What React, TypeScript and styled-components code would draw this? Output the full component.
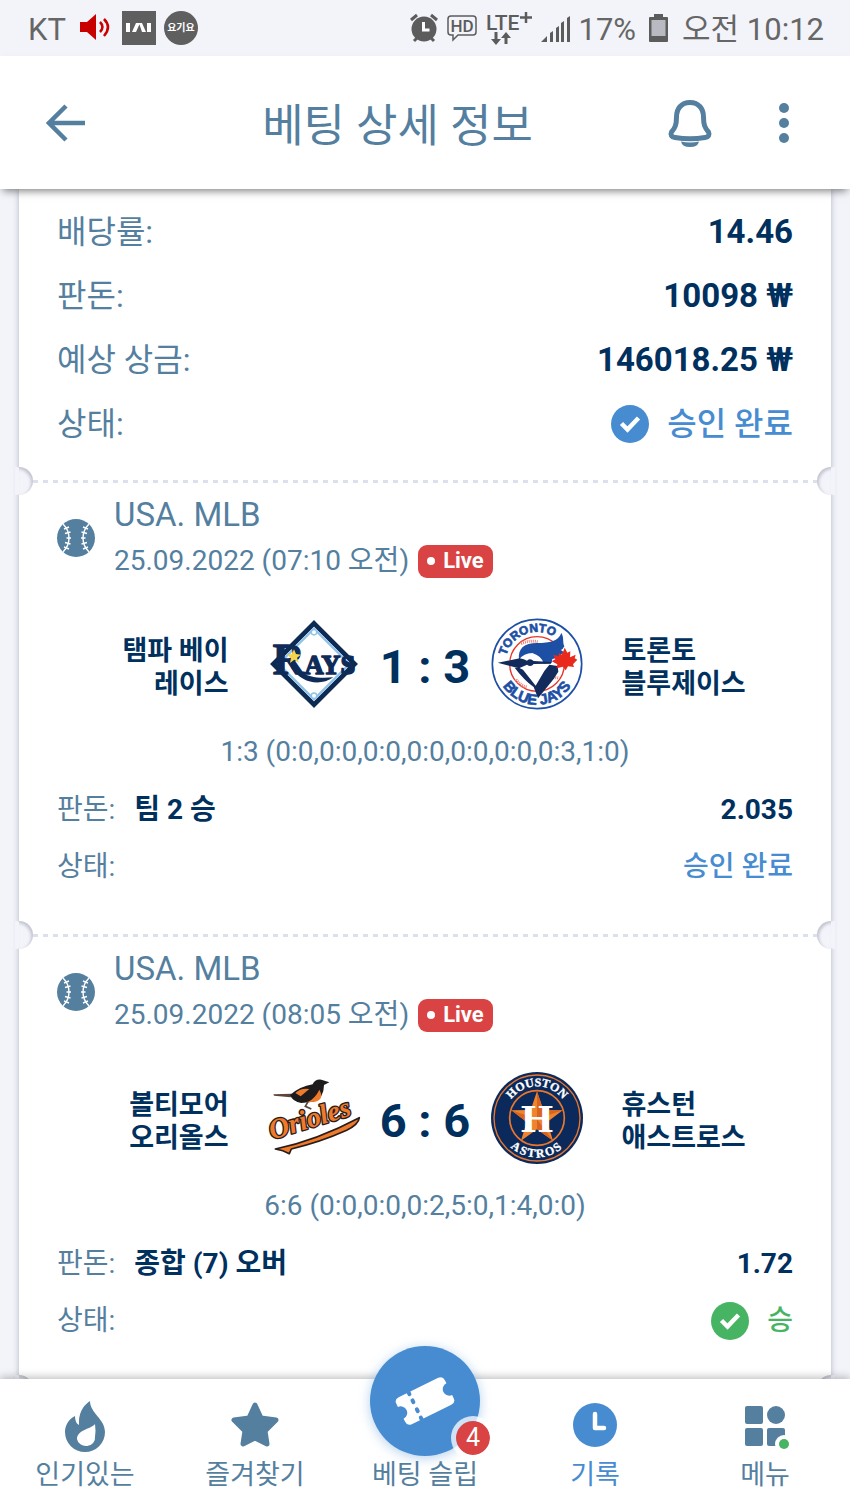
import styled, { createGlobalStyle } from 'styled-components'

const font = `Roboto, 'Noto Sans CJK KR', sans-serif`
const slate = '#557f9f'
const navy = '#00305e'
const blue = '#478cd1'
const green = '#47b463'
const red = '#d94343'
const page = '#f3f4fa'

const GlobalStyle = createGlobalStyle`
  * {
    box-sizing: border-box;
  }
  body {
    margin: 0;
    background: ${page};
    font-family: ${font};
    color: ${slate};
  }
  button {
    padding: 0;
    border: 0;
    background: none;
    font: inherit;
    color: inherit;
    cursor: pointer;
  }
  dl,
  dd {
    margin: 0;
  }
`

type MatchData = {
  league: string
  date: string
  home: string[]
  away: string[]
  score: string
  detail: string
  pick: string
  odds: string
  won: boolean
  homeLogo: () => React.ReactNode
  awayLogo: () => React.ReactNode
}

const RaysLogo = () => (
  <svg width="94" height="94" viewBox="51 51 282 282" role="img" aria-label="Rays">
    <path d="M192 70 314 192 192 314 70 192Z" fill="#fff" stroke="#0c2a52" strokeWidth="14" />
    <path d="M192 86 298 192 192 298 86 192Z" fill="none" stroke="#8fc3ea" strokeWidth="7" />
    <circle cx="192" cy="97" r="8" fill="#fff" stroke="#8fc3ea" strokeWidth="4" />
    <circle cx="192" cy="287" r="8" fill="#fff" stroke="#8fc3ea" strokeWidth="4" />
    <text
      x="68"
      y="221"
      fontFamily="Liberation Serif, serif"
      fontWeight="bold"
      fill="#0f2b57"
      stroke="#0f2b57"
      strokeWidth="4"
      strokeLinejoin="round">
      <tspan fontSize="132">R</tspan>
      <tspan fontSize="80">AYS</tspan>
    </text>
    <path d="M122 180C140 212 166 240 250 232C210 260 156 250 124 204Z" fill="#0f2b57" />
    <path d="m132 148 6 14 15 2-12 9 6 16-14-10-13 10 3-16-12-8 15-3Z" fill="#f6d54a" />
  </svg>
)

const BlueJaysLogo = () => (
  <svg width="94" height="94" viewBox="719 50 282 282" role="img" aria-label="Blue Jays">
    <defs>
      <path id="jays-top" d="M764 191a96 96 0 0 1 192 0" />
      <path id="jays-bottom" d="M738 191a122 122 0 0 0 244 0" />
    </defs>
    <circle cx="860" cy="191" r="134" fill="#fff" stroke="#1d4fa5" strokeWidth="5" />
    <circle cx="860" cy="191" r="82" fill="#fff" stroke="#e5352c" strokeWidth="4" />
    <path
      d="M812 130q28-12 50-5M797 238q16 20 34 22M902 228q14 8 24 2"
      fill="none"
      stroke="#ee7b72"
      strokeWidth="9"
      strokeDasharray="3 3"
    />
    <g fontFamily="Liberation Sans, sans-serif" fontWeight="bold" fill="#1d4fa5" stroke="#1d4fa5" strokeWidth="2">
      <text textAnchor="middle" fontSize="36">
        <textPath href="#jays-top" startOffset="38%">
          TORONTO
        </textPath>
      </text>
      <text textAnchor="middle" fontSize="44">
        <textPath href="#jays-bottom" startOffset="50%">
          BLUE JAYS
        </textPath>
      </text>
    </g>
    <path d="M805 180 845 160 880 175 895 190 883 212 857 260 815 205Z" fill="#fff" />
    <path
      d="M806 178C802 144 822 128 860 128C900 128 924 122 933 98C942 112 936 126 942 138Q938 148 930 150L940 154Q926 172 906 176L904 188 880 190Q876 168 846 158Q820 158 806 178Z"
      fill="#1d4fa5"
    />
    <path d="M742 187 808 174Q822 176 830 181Q840 172 850 182L902 185V190L850 191Q842 202 830 193L806 204Z" fill="#132a5c" />
    <path
      d="M793 202Q820 238 850 260L863 294 910 236 924 214 922 197 897 193 882 212 856 256 818 208 806 202Z"
      fill="#132a5c"
    />
    <path
      d="m943 142 8 15 9-4-1 18 17-8-3 11 8 4-13 14 3 8-18-2-7 12-8-11-19 5 2-12-17-9 11-6-6-14 16 4 1-9 9 5Z"
      fill="#e8291c"
    />
  </svg>
)

const OriolesLogo = () => (
  <svg width="94" height="94" viewBox="51 50 282 282" role="img" aria-label="Orioles">
    <path d="M70 120 126 118 122 129 72 124Z" fill="#5c4438" />
    <path d="M120 122Q150 96 188 90Q194 74 214 76L238 84 222 92Q222 132 190 142L154 146Q128 142 120 122Z" fill="#1d1b1c" />
    <path d="M136 116Q152 100 178 104L152 126ZM208 106Q224 134 196 142L172 144Q196 132 208 106Z" fill="#ee7b2c" />
    <path d="M174 142 166 156 184 164" fill="none" stroke="#5c4438" strokeWidth="5" />
    <path
      d="M76 284Q200 258 328 190Q326 210 290 228Q210 264 124 284L118 298Q100 288 76 284Z"
      fill="#ee7b2c"
      stroke="#2a1c18"
      strokeWidth="5"
      strokeLinejoin="round"
    />
    <text
      transform="rotate(-17 66 256)"
      x="66"
      y="256"
      fontFamily="Liberation Serif, serif"
      fontStyle="italic"
      fontWeight="bold"
      fontSize="84"
      fill="#ee7b2c"
      stroke="#2a1c18"
      strokeWidth="8"
      strokeLinejoin="round"
      paintOrder="stroke">
      Orioles
    </text>
  </svg>
)

const AstrosLogo = () => (
  <svg width="94" height="94" viewBox="719 49 282 282" role="img" aria-label="Astros">
    <defs>
      <path id="astros-top" d="M765 190a95 95 0 0 1 190 0" />
      <path id="astros-bottom" d="M742 190a118 118 0 0 0 236 0" />
    </defs>
    <circle cx="860" cy="190" r="138" fill="#0b2a5b" />
    <circle cx="860" cy="190" r="129" fill="none" stroke="#e8772e" strokeWidth="4" />
    <circle cx="860" cy="190" r="82" fill="none" stroke="#e8772e" strokeWidth="5" />
    <g fontFamily="Liberation Serif, serif" fontWeight="bold" fontSize="36" fill="#fff" stroke="#fff">
      <text textAnchor="middle">
        <textPath href="#astros-top" startOffset="50%">
          HOUSTON
        </textPath>
      </text>
      <text textAnchor="middle" letterSpacing="5">
        <textPath href="#astros-bottom" startOffset="50%">
          ASTROS
        </textPath>
      </text>
    </g>
    <path d="m860 110 19 56 58 1-46 35 17 56-48-34-48 34 17-56-46-35 58-1Z" fill="#f0832f" />
    <path d="m860 110 19 56 58 1-77 26ZM860 193l48 65-48-34ZM860 193l-77-26 46 35Z" fill="#d9641f" />
    <text
      x="860"
      y="231"
      textAnchor="middle"
      fontFamily="DejaVu Serif, serif"
      fontWeight="bold"
      fontSize="108"
      fill="#fff">
      H
    </text>
  </svg>
)

const BaseballIcon = () => (
  <svg width="38" height="38" viewBox="0 0 38 38">
    <circle cx="19" cy="19" r="19" fill={slate} />
    <g fill="none" stroke="#fff" strokeWidth="1.4">
      <path d="M6 5Q12 11 12 19T6 33M32 5Q26 11 26 19T32 33" />
      <path d="M7 10 12 8M8 14.500 13.500 13M9.500 19H14M8 23.500 13.500 25M7 28 12 30M31 10 26 8M30 14.500 24.500 13M28.500 19H24M30 23.500 24.500 25M31 28 26 30" />
    </g>
  </svg>
)

const CheckIcon = ({ color }: { color: string }) => (
  <svg width="38" height="38" viewBox="0 0 38 38">
    <circle cx="19" cy="19" r="19" fill={color} />
    <path d="m10.500 18.500 6 6L27.500 13" fill="none" stroke="#fff" strokeWidth="4.500" />
  </svg>
)

const matches: MatchData[] = [
  {
    league: 'USA. MLB',
    date: '25.09.2022 (07:10 오전)',
    home: ['탬파 베이', '레이스'],
    away: ['토론토', '블루제이스'],
    score: '1 : 3',
    detail: '1:3 (0:0,0:0,0:0,0:0,0:0,0:0,0:3,1:0)',
    pick: '팀 2 승',
    odds: '2.035',
    won: false,
    homeLogo: RaysLogo,
    awayLogo: BlueJaysLogo,
  },
  {
    league: 'USA. MLB',
    date: '25.09.2022 (08:05 오전)',
    home: ['볼티모어', '오리올스'],
    away: ['휴스턴', '애스트로스'],
    score: '6 : 6',
    detail: '6:6 (0:0,0:0,0:2,5:0,1:4,0:0)',
    pick: '종합 (7) 오버',
    odds: '1.72',
    won: true,
    homeLogo: OriolesLogo,
    awayLogo: AstrosLogo,
  },
]

const StatusIcons = () => (
  <StatusBar>
    <StatusGroup $gap={8}>
      <StatusText>KT</StatusText>
      <svg width="40" height="34" viewBox="0 0 40 34">
        <path d="M6 11h7l9-8v26l-9-8H6Z" fill="#c80000" />
        <path d="M26 11q5 5 0 10M30 8q8 8 0 17" fill="none" stroke="#c80000" strokeWidth="2.500" />
      </svg>
      <svg width="34" height="34" viewBox="0 0 34 34">
        <path d="M0 0h34v34H0Z" fill="#5f5f5f" />
        <path d="M4 12h4v9H4ZM10 21l4-9h4l-4 9ZM17 12h3l4 9h-4ZM25 12h4v9h-4Z" fill="#fff" />
      </svg>
      <RoundBadge>요기요</RoundBadge>
    </StatusGroup>
    <StatusGroup $gap={7}>
      <svg width="30" height="30" viewBox="0 0 30 30">
        <circle cx="15" cy="16" r="12.500" fill="#5c5c5c" />
        <path d="M2 7l6-5M28 7l-6-5M5 28l4-4M25 28l-4-4" stroke="#5c5c5c" strokeWidth="3" />
        <path d="M14.500 9v8h6" fill="none" stroke="#fff" strokeWidth="3" />
      </svg>
      <svg width="32" height="28" viewBox="0 0 32 28">
        <path
          d="M5 2h22q3 0 3 3v13q0 3-3 3H12l-5 5v-5H5q-3 0-3-3V5q0-3 3-3Z"
          fill="none"
          stroke="#5c5c5c"
          strokeWidth="1.500"
        />
        <text x="16" y="17.500" textAnchor="middle" fontFamily={font} fontWeight="500" fontSize="17" fill="#5c5c5c">
          HD
        </text>
      </svg>
      <svg width="48" height="36" viewBox="0 0 48 36">
        <text x="1" y="20" fontFamily={font} fontSize="21" fontWeight="500" fill="#5c5c5c">
          LTE
        </text>
        <path d="M41 2v11M35 7.500h12" stroke="#5c5c5c" strokeWidth="2.500" />
        <path d="M11 22v9M21 34v-9" stroke="#5c5c5c" strokeWidth="3" />
        <path d="M6 29h10l-5 6ZM16 28h10l-5-6Z" fill="#5c5c5c" />
      </svg>
      <svg width="32" height="30" viewBox="0 0 32 30">
        <path d="M1 29 7 23V29ZM10 20l3-2v11h-3ZM16 15l3-2v16h-3ZM21 10l3-2v21h-3ZM27 5l3-2v26h-3Z" fill="#5c5c5c" />
      </svg>
      <StatusText>17%</StatusText>
      <svg width="32" height="32" viewBox="0 0 32 32">
        <path d="M7 5h4V2h9v3h4q1 0 1 1v23q0 1-1 1H7q-1 0-1-1V6q0-1 1-1Z" fill="#5c5c5c" />
        <path d="M8.500 8h14v16h-14Z" fill="#b9b9c2" />
      </svg>
      <StatusText>오전 10:12</StatusText>
    </StatusGroup>
  </StatusBar>
)

const App = () => (
  <>
    <GlobalStyle />
    <Screen>
      <StatusIcons />
      <Header>
        <HeaderButton $width={132} aria-label="뒤로">
          <svg width="40" height="40" viewBox="0 0 40 40">
            <path d="M39 20H4M20 3 3 20 20 37" fill="none" stroke={slate} strokeWidth="4.500" />
          </svg>
        </HeaderButton>
        <Title>베팅 상세 정보</Title>
        <HeaderButton $width={94} aria-label="알림">
          <svg width="46" height="50" viewBox="0 0 46 50">
            <path
              d="M23 4.500C14 4.500 9.500 11 9.500 19C9.500 27 8 30 4.500 34Q2.500 38.500 8 39.500Q23 42 38 39.500Q43.500 38.500 41.500 34C38 30 36.500 27 36.500 19C36.500 11 32 4.500 23 4.500Z"
              fill="none"
              stroke={slate}
              strokeWidth="5"
            />
            <path d="M14 43.500Q23 45.500 32 43.500Q31 49 23 49T14 43.500Z" fill={slate} />
          </svg>
        </HeaderButton>
        <HeaderButton $width={94} aria-label="더보기">
          <svg width="12" height="40" viewBox="0 0 12 40">
            <g fill={slate}>
              <circle cx="6" cy="5" r="5" />
              <circle cx="6" cy="20" r="5" />
              <circle cx="6" cy="35" r="5" />
            </g>
          </svg>
        </HeaderButton>
      </Header>
      <Main>
        <Ticket>
          <Summary>
            <SummaryRow>
              <dt>배당률:</dt>
              <Value $large>14.46</Value>
            </SummaryRow>
            <SummaryRow>
              <dt>판돈:</dt>
              <Value $large>10098 ₩</Value>
            </SummaryRow>
            <SummaryRow>
              <dt>예상 상금:</dt>
              <Value $large>146018.25 ₩</Value>
            </SummaryRow>
            <SummaryRow>
              <dt>상태:</dt>
              <Status $color={blue}>
                <CheckIcon color={blue} />
                승인 완료
              </Status>
            </SummaryRow>
          </Summary>
          {matches.map((m) => (
            <Match key={m.date}>
              <Tear />
              <Event>
                <BaseballIcon />
                <div>
                  <League>{m.league}</League>
                  <EventDate>
                    {m.date}
                    <Live>Live</Live>
                  </EventDate>
                </div>
              </Event>
              <Teams>
                <Team $align="right">
                  {m.home.map((line) => (
                    <span key={line}>{line}</span>
                  ))}
                </Team>
                <m.homeLogo />
                <Score>{m.score}</Score>
                <m.awayLogo />
                <Team $align="left">
                  {m.away.map((line) => (
                    <span key={line}>{line}</span>
                  ))}
                </Team>
              </Teams>
              <Detail>{m.detail}</Detail>
              <dl>
                <BetRow>
                  <dt>판돈:</dt>
                  <Pick>{m.pick}</Pick>
                  <Value>{m.odds}</Value>
                </BetRow>
                <BetRow>
                  <dt>상태:</dt>
                  {m.won ? (
                    <Status $color={green}>
                      <CheckIcon color={green} />승
                    </Status>
                  ) : (
                    <Status $color={blue}>승인 완료</Status>
                  )}
                </BetRow>
              </dl>
            </Match>
          ))}
          <Tear />
        </Ticket>
      </Main>
      <Nav>
        <NavItem href="#popular">
          <svg width="52" height="52" viewBox="0 0 52 52">
            <path
              d="M31 0C31 12 46 18 46 31A20 20 0 0 1 6 31C6 24 10 18 16 15Q16 22 20 24Q19 8 31 0ZM36 23C32 28 18 29 18 38A9 8 0 0 0 36 36Q37 30 36 23Z"
              fill={slate}
              fillRule="evenodd"
            />
          </svg>
          인기있는
        </NavItem>
        <NavItem href="#favorites">
          <svg width="52" height="52" viewBox="0 0 52 52">
            <path
              d="M26 4 32 17 47 19 36 30 38 43 26 37 14 43 16 30 5 19 20 17Z"
              fill={slate}
              stroke={slate}
              strokeWidth="5"
              strokeLinejoin="round"
            />
          </svg>
          즐겨찾기
        </NavItem>
        <NavItem href="#slip">
          <Slip>
            <svg width="60" height="60" viewBox="0 0 60 60">
              <g transform="rotate(-26 30 30)">
                <path
                  d="M8 15H52Q57 15 57 20V23.500A6.500 6.500 0 0 0 57 36.500V40Q57 45 52 45H8Q3 45 3 40V36.500A6.500 6.500 0 0 0 3 23.500V20Q3 15 8 15Z"
                  fill="#fff"
                />
                <path d="M19 14v3M19 24v2M19 34v2M19 43v3" stroke={blue} strokeWidth="4" strokeLinecap="round" />
              </g>
            </svg>
            <Count>4</Count>
          </Slip>
          베팅 슬립
        </NavItem>
        <NavItem href="#history" $active>
          <svg width="52" height="52" viewBox="0 0 52 52">
            <circle cx="26" cy="24" r="22" fill={blue} />
            <path d="M26 13v14h9" fill="none" stroke="#fff" strokeWidth="4.500" strokeLinecap="round" strokeLinejoin="round" />
          </svg>
          기록
        </NavItem>
        <NavItem href="#menu">
          <svg width="52" height="52" viewBox="0 0 52 52">
            <g fill={slate}>
              <rect x="6" y="5" width="18" height="18" rx="2" />
              <circle cx="37" cy="14" r="9" />
              <rect x="6" y="27" width="18" height="18" rx="2" />
              <rect x="28" y="27" width="18" height="18" rx="2" />
            </g>
            <circle cx="45" cy="43" r="9" fill="#fff" />
            <circle cx="45" cy="43" r="5" fill={green} />
          </svg>
          메뉴
        </NavItem>
      </Nav>
    </Screen>
  </>
)

const Screen = styled.div`
  display: flex;
  flex-direction: column;
  height: 100vh;
`

const StatusBar = styled.div`
  display: flex;
  justify-content: space-between;
  align-items: center;
  flex: none;
  height: 56px;
  padding: 0 26px 0 28px;
`

const StatusGroup = styled.div<{ $gap: number }>`
  display: flex;
  align-items: center;
  gap: ${(p) => p.$gap}px;
`

const StatusText = styled.span`
  padding-top: 4px;
  font-size: 31px;
  line-height: 34px;
  color: #666;
`

const RoundBadge = styled.span`
  display: grid;
  place-items: center;
  width: 34px;
  height: 34px;
  border-radius: 50%;
  background: #5f5f5f;
  color: #fff;
  font-size: 10px;
  font-weight: 700;
  line-height: 12px;
`

const Header = styled.header`
  display: flex;
  align-items: center;
  flex: none;
  height: 133px;
  padding-right: 19px;
  background: #fff;
  box-shadow: 0 5px 8px -3px rgba(0, 0, 0, 0.5);
  z-index: 1;
`

const HeaderButton = styled.button<{ $width: number }>`
  display: grid;
  place-items: center;
  width: ${(p) => p.$width}px;
  height: 94px;
`

const Title = styled.h1`
  flex: 1;
  margin: 0;
  padding: 8px 0 0 20px;
  text-align: center;
  font-size: 45px;
  font-weight: 400;
  line-height: 60px;
`

const Main = styled.main`
  flex: 1;
  min-height: 0;
  overflow: hidden auto;
  scrollbar-width: none;
  padding: 0 19px;
`

const Ticket = styled.article`
  background: #fff;
  box-shadow: 0 0 6px rgba(60, 65, 90, 0.35);
`

const Summary = styled.dl`
  padding: 11px 38px 25px;
`

const SummaryRow = styled.div`
  display: flex;
  align-items: center;
  justify-content: space-between;
  height: 64px;
  font-size: 32px;
  line-height: 40px;
`

const Value = styled.dd<{ $large?: boolean }>`
  margin-left: auto;
  font-size: ${(p) => (p.$large ? 33 : 28)}px;
  font-weight: 700;
  color: ${navy};
`

const Status = styled.dd<{ $color: string }>`
  display: flex;
  align-items: center;
  gap: 18px;
  margin-left: auto;
  font-weight: 500;
  color: ${(p) => p.$color};
`

const Match = styled.section`
  padding: 0 38px 41px;
`

const Tear = styled.div`
  display: flex;
  justify-content: space-between;
  align-items: center;
  height: 28px;
  margin: -14px 0 0;
  background: repeating-linear-gradient(90deg, #dcdfec 0 5px, transparent 5px 10px) center / calc(100% - 28px) 3px
    no-repeat;
  ${Match} > & {
    margin: -14px -38px -3px;
  }
  &::before,
  &::after {
    content: '';
    width: 14px;
    height: 28px;
    background: ${page};
  }
  &::before {
    border-radius: 0 14px 14px 0;
    box-shadow: inset -2px 2px 3px rgba(60, 65, 90, 0.25), -4px 0 0 ${page};
  }
  &::after {
    border-radius: 14px 0 0 14px;
    box-shadow: inset 2px 2px 3px rgba(60, 65, 90, 0.25), 4px 0 0 ${page};
  }
`

const Event = styled.header`
  display: flex;
  align-items: center;
  gap: 19px;
`

const League = styled.div`
  font-size: 33px;
  line-height: 46px;
`

const EventDate = styled.div`
  display: flex;
  align-items: center;
  gap: 9px;
  font-size: 28px;
  line-height: 46px;
`

const Live = styled.span`
  display: flex;
  align-items: center;
  gap: 8px;
  height: 33px;
  padding: 0 9px;
  border-radius: 9px;
  background: ${red};
  color: #fff;
  font-size: 22px;
  font-weight: 700;
  &::before {
    content: '';
    width: 8px;
    height: 8px;
    border-radius: 50%;
    background: #fff;
  }
`

const Teams = styled.div`
  display: grid;
  grid-template-columns: 1fr 94px 129px 94px 1fr;
  align-items: center;
  margin-top: 33px;
`

const Team = styled.div<{ $align: string }>`
  display: flex;
  flex-direction: column;
  padding: 8px 38px 0;
  text-align: ${(p) => p.$align};
  white-space: nowrap;
  font-size: 27px;
  font-weight: 700;
  line-height: 33px;
  color: ${navy};
`

const Score = styled.strong`
  padding-top: 6px;
  text-align: center;
  font-size: 47px;
  line-height: 56px;
  color: ${navy};
`

const Detail = styled.p`
  margin: 21px 0 8px;
  text-align: center;
  font-size: 28px;
  line-height: 40px;
`

const BetRow = styled.div`
  display: flex;
  align-items: center;
  gap: 19px;
  height: 57px;
  padding-top: 2px;
  font-size: 28px;
  line-height: 36px;
`

const Pick = styled.dd`
  font-weight: 700;
  color: ${navy};
`

const Nav = styled.nav`
  display: grid;
  grid-template: 132px / repeat(5, 1fr);
  flex: none;
  background: #fff;
  box-shadow: 0 -2px 8px rgba(0, 0, 0, 0.25);
  z-index: 1;
`

const NavItem = styled.a<{ $active?: boolean }>`
  display: flex;
  flex-direction: column;
  align-items: center;
  justify-content: flex-end;
  min-height: 0;
  padding-bottom: 14px;
  text-decoration: none;
  white-space: nowrap;
  font-size: 27px;
  line-height: 44px;
  color: ${(p) => (p.$active ? blue : slate)};
`

const Slip = styled.span`
  display: grid;
  place-items: center;
  flex: none;
  position: relative;
  width: 110px;
  height: 110px;
  margin-bottom: -3px;
  border-radius: 50%;
  background: ${blue};
  box-shadow: 0 2px 12px rgba(71, 140, 209, 0.4);
`

const Count = styled.span`
  position: absolute;
  right: -15px;
  bottom: -4px;
  display: grid;
  place-items: center;
  width: 44px;
  height: 44px;
  border: 5px solid rgba(255, 255, 255, 0.75);
  border-radius: 50%;
  background: ${red} padding-box;
  color: #fff;
  font-size: 25px;
  line-height: 30px;
`

export default App
